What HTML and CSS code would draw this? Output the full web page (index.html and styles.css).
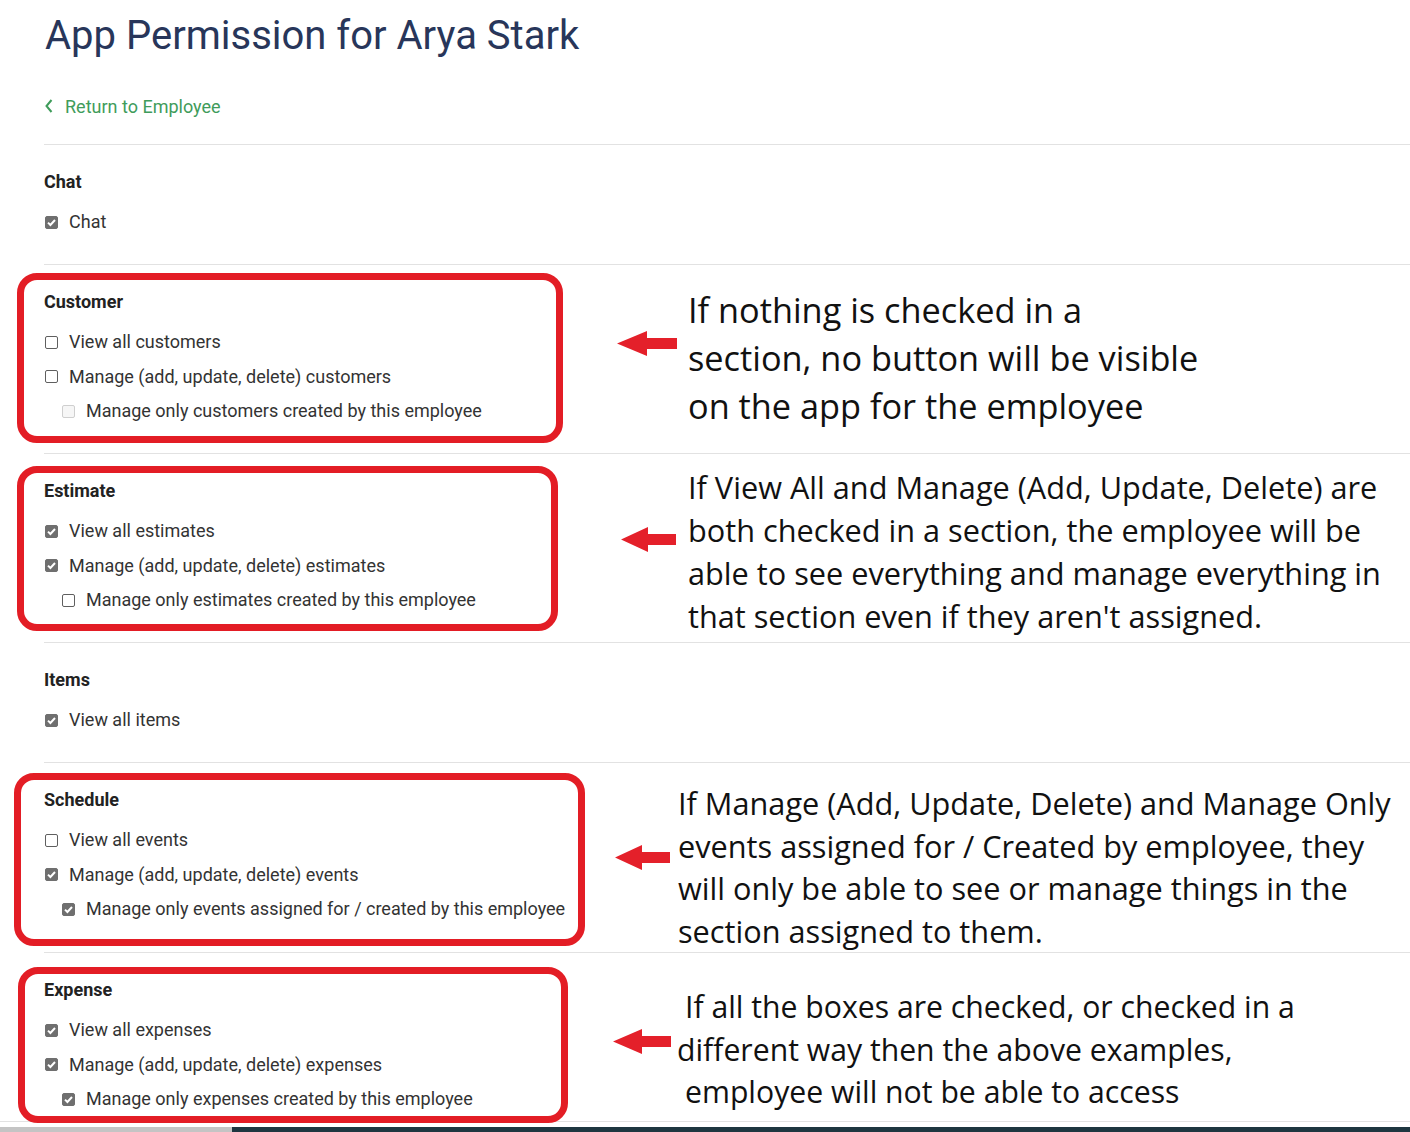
FILE: index.html
```html
<!DOCTYPE html>
<html>
<head>
<meta charset="utf-8">
<link rel="stylesheet" href="styles.css">
</head>
<body>
<div class="page">
  <h1 class="title">App Permission for Arya Stark</h1>
  <a class="back" href="#"><svg class="chev" width="10" height="16" viewBox="0 0 10 16"><path d="M7.5 2 L2.5 8 L7.5 14" fill="none" stroke="#3f9c5b" stroke-width="2"/></svg>Return to Employee</a>

  <section class="sec">
    <div class="perm">
      <div class="hd">Chat</div>
      <div class="list">
        <label class="item"><span class="cb on"></span>Chat</label>
      </div>
    </div>
  </section>

  <section class="sec">
    <div class="hl hl-cust"></div>
    <svg class="arrow ar-1" width="60" height="25" viewBox="0 0 60 25"><polygon points="0,12.5 30,0 30,7 60,7 60,18 30,18 30,25" fill="#e4202a"/></svg>
    <div class="perm">
      <div class="hd">Customer</div>
      <div class="list">
        <label class="item"><span class="cb"></span>View all customers</label>
        <label class="item"><span class="cb"></span>Manage (add, update, delete) customers</label>
        <label class="item sub"><span class="cb dis"></span>Manage only customers created by this employee</label>
      </div>
    </div>
    <div class="note note-1">
      <span class="ln">If nothing is checked in a</span>
      <span class="ln">section, no button will be visible</span>
      <span class="ln">on the app for the employee</span>
    </div>
  </section>

  <section class="sec">
    <div class="hl hl-est"></div>
    <svg class="arrow ar-2" width="55" height="25" viewBox="0 0 55 25"><polygon points="0,12.5 27,0 27,7 55,7 55,18 27,18 27,25" fill="#e4202a"/></svg>
    <div class="perm">
      <div class="hd">Estimate</div>
      <div class="list">
        <label class="item"><span class="cb on"></span>View all estimates</label>
        <label class="item"><span class="cb on"></span>Manage (add, update, delete) estimates</label>
        <label class="item sub"><span class="cb"></span>Manage only estimates created by this employee</label>
      </div>
    </div>
    <div class="note note-2">
      <span class="ln">If View All and Manage (Add, Update, Delete) are</span>
      <span class="ln">both checked in a section, the employee will be</span>
      <span class="ln">able to see everything and manage everything in</span>
      <span class="ln">that section even if they aren't assigned.</span>
    </div>
  </section>

  <section class="sec">
    <div class="perm">
      <div class="hd">Items</div>
      <div class="list">
        <label class="item"><span class="cb on"></span>View all items</label>
      </div>
    </div>
  </section>

  <section class="sec">
    <div class="hl hl-sched"></div>
    <svg class="arrow ar-3" width="55" height="25" viewBox="0 0 55 25"><polygon points="0,12.5 27,0 27,7 55,7 55,18 27,18 27,25" fill="#e4202a"/></svg>
    <div class="perm">
      <div class="hd">Schedule</div>
      <div class="list">
        <label class="item"><span class="cb"></span>View all events</label>
        <label class="item"><span class="cb on"></span>Manage (add, update, delete) events</label>
        <label class="item sub"><span class="cb on"></span>Manage only events assigned for / created by this employee</label>
      </div>
    </div>
    <div class="note note-3">
      <span class="ln">If Manage (Add, Update, Delete) and Manage Only</span>
      <span class="ln">events assigned for / Created by employee, they</span>
      <span class="ln">will only be able to see or manage things in the</span>
      <span class="ln">section assigned to them.</span>
    </div>
  </section>

  <section class="sec sec-last">
    <div class="hl hl-exp"></div>
    <svg class="arrow ar-4" width="58" height="25" viewBox="0 0 58 25"><polygon points="0,12.5 29,0 29,7 58,7 58,18 29,18 29,25" fill="#e4202a"/></svg>
    <div class="perm">
      <div class="hd">Expense</div>
      <div class="list">
        <label class="item"><span class="cb on"></span>View all expenses</label>
        <label class="item"><span class="cb on"></span>Manage (add, update, delete) expenses</label>
        <label class="item sub"><span class="cb on"></span>Manage only expenses created by this employee</label>
      </div>
    </div>
    <div class="note note-4">
      <span class="ln ind">If all the boxes are checked, or checked in a</span>
      <span class="ln">different way then the above examples,</span>
      <span class="ln ind">employee will not be able to access</span>
    </div>
  </section>
</div>
<div class="foot">
  <div class="foot-grey"></div>
  <div class="foot-dark"></div>
</div>
</body>
</html>
```

FILE: styles.css
```css
html, body {
  margin: 0;
  padding: 0;
  overflow: hidden;
  background: #fff;
}
body {
  font-family: Roboto, "Liberation Sans", sans-serif;
  color: #333;
  width: 1410px;
  height: 1132px;
}
.page {
  padding-left: 44px;
}
.title {
  margin: 0;
  padding-top: 12px;
  font-size: 40px;
  line-height: 48px;
  font-weight: 400;
  color: #28365a;
  padding-left: 1px;
}
.back {
  display: flex;
  align-items: center;
  margin-top: 34px;
  height: 24px;
  font-size: 18px;
  color: #3f9c5b;
  text-decoration: none;
}
.chev {
  margin-right: 11px;
}
.sec {
  position: relative;
  display: flex;
  align-items: flex-start;
  border-top: 1px solid #e2e2e2;
}
.back + .sec {
  margin-top: 26px;
}
.perm {
  width: 600px;
  flex: none;
  padding: 27px 0 32px;
}
.sec-last .perm {
  padding-bottom: 12px;
}
.hd {
  font-size: 18px;
  line-height: 20px;
  font-weight: 700;
  color: #222;
  margin-bottom: 20px;
}
.list {
  display: flex;
  flex-direction: column;
  gap: 14.5px;
}
.item {
  display: flex;
  align-items: center;
  font-size: 18px;
  line-height: 20px;
  color: #333;
}
.item.sub {
  padding-left: 17px;
}
.cb {
  width: 13px;
  height: 13px;
  box-sizing: border-box;
  border: 1px solid #5f5f5f;
  border-radius: 2px;
  background: #fff;
  margin-left: 1px;
  margin-right: 11px;
  flex: none;
}
.cb.dis {
  border-color: #cfcfcf;
  background: #f6f6f6;
}
.cb.on {
  border-color: #6f6f6f;
  background: #6f6f6f url("data:image/svg+xml;utf8,<svg xmlns='http://www.w3.org/2000/svg' width='13' height='13' viewBox='0 0 13 13'><path d='M3 6.6 L5.4 9 L10 4' fill='none' stroke='white' stroke-width='2'/></svg>") center/13px 13px no-repeat;
}
.hl {
  position: absolute;
  border: 7px solid #e31d25;
  border-radius: 20px;
  box-sizing: border-box;
}
.hl-cust { left: -27px; top: 8px; width: 546px; height: 170px; }
.hl-est { left: -27px; top: 12px; width: 541px; height: 165px; }
.hl-sched { left: -30px; top: 10px; width: 571px; height: 173px; }
.hl-exp { left: -26px; top: 14px; width: 550px; height: 156px; }

.arrow {
  position: absolute;
}
.ar-1 { left: 573px; top: 66px; }
.ar-2 { left: 577px; top: 73px; }
.ar-3 { left: 571px; top: 82px; }
.ar-4 { left: 569px; top: 76px; }

.note {
  font-family: "Open Sans", "Noto Sans", sans-serif;
  color: #111;
  display: flex;
  flex-direction: column;
  white-space: nowrap;
}
.ln {
  display: block;
}
.note-1 {
  margin-left: 44px;
  margin-top: 21px;
  font-size: 34.3px;
  line-height: 48px;
}
.note-2 {
  margin-left: 44px;
  margin-top: 12px;
  font-size: 30.7px;
  line-height: 43px;
}
.note-3 {
  margin-left: 34px;
  margin-top: 19px;
  font-size: 30.7px;
  line-height: 42.5px;
}
.note-4 {
  margin-left: 33px;
  margin-top: 33px;
  font-size: 30.2px;
  line-height: 42.5px;
}
.note-4 .ind {
  padding-left: 8px;
}
.foot {
  display: flex;
  border-top: 1px solid #e2e2e2;
  padding-top: 5px;
}
.foot-grey {
  width: 232px;
  height: 6px;
  background: #c4c4c4;
}
.foot-dark {
  flex: 1;
  height: 6px;
  background: #1e3640;
}
```
